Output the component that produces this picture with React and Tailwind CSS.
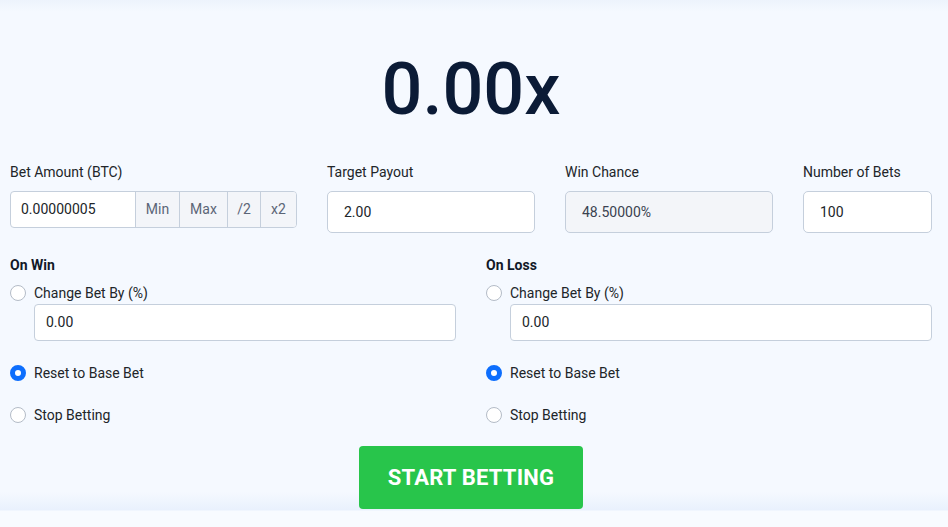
import React from "react";

function Radio({ checked, label }) {
  return (
    <div className="flex items-center h-5">
      <span
        className={
          checked
            ? "w-4 h-4 rounded-full border-[5px] border-[#0d6efd] bg-white box-border"
            : "w-4 h-4 rounded-full border border-[#b4bcc7] bg-white box-border"
        }
      />
      <span className="ml-2 text-[14px] leading-5 text-[#212529]">{label}</span>
    </div>
  );
}

function Section({ title }) {
  return (
    <div className="w-[446px] flex flex-col">
      <div className="text-[14px] leading-5 font-bold text-[#111827]">{title}</div>
      <div className="mt-[8px]">
        <Radio checked={false} label="Change Bet By (%)" />
      </div>
      <div className="mt-[1px] ml-[24px] h-[37px] border border-[#c5cfdc] rounded-[4px] bg-white flex items-center px-[11px] text-[14px] text-[#212529]">
        0.00
      </div>
      <div className="mt-[22px]">
        <Radio checked={true} label="Reset to Base Bet" />
      </div>
      <div className="mt-[22px]">
        <Radio checked={false} label="Stop Betting" />
      </div>
    </div>
  );
}

export default function App() {
  return (
    <div
      className="w-full h-[527px] overflow-hidden bg-[linear-gradient(to_bottom,#edf3fc_0px,#f5f9ff_12px,#f5f9ff_492px,#e9f1fd_510px,#f8fbff_511px,#f8fbff_527px)]"
      style={{ fontFamily: "Roboto, 'Noto Sans', sans-serif" }}
    >
      <div className="pl-[10px] pr-[16px] pt-[54px] flex flex-col">
        <div className="text-center text-[72px] leading-none font-medium text-[#0b1b36]">0.00x</div>

        <div className="mt-[36px] flex gap-[30px] items-start">
          <div className="w-[287px] flex flex-col">
            <div className="text-[14px] leading-5 text-[#212529] mb-[9px]">Bet Amount (BTC)</div>
            <div className="h-[37px] flex border border-[#c5cfdc] rounded-[4px] overflow-hidden bg-white text-[14px]">
              <div className="flex-1 flex items-center px-[10px] text-[#212529]">0.00000005</div>
              <div className="w-[44px] flex items-center justify-center bg-[#f3f5f9] border-l border-[#c5cfdc] text-[#5b6577]">Min</div>
              <div className="w-[48px] flex items-center justify-center bg-[#f3f5f9] border-l border-[#c5cfdc] text-[#5b6577]">Max</div>
              <div className="w-[33px] flex items-center justify-center bg-[#f3f5f9] border-l border-[#c5cfdc] text-[#5b6577]">/2</div>
              <div className="w-[36px] flex items-center justify-center bg-[#f3f5f9] border-l border-[#c5cfdc] text-[#5b6577]">x2</div>
            </div>
          </div>
          <div className="w-[208px] flex flex-col">
            <div className="text-[14px] leading-5 text-[#212529] mb-[9px]">Target Payout</div>
            <div className="h-[42px] border border-[#c5cfdc] rounded-[5px] bg-white flex items-center px-[16px] text-[14px] text-[#212529]">2.00</div>
          </div>
          <div className="w-[208px] flex flex-col">
            <div className="text-[14px] leading-5 text-[#212529] mb-[9px]">Win Chance</div>
            <div className="h-[42px] border border-[#c5cfdc] rounded-[5px] bg-[#f3f5f9] flex items-center px-[16px] text-[14px] text-[#3a4250]">48.50000%</div>
          </div>
          <div className="w-[129px] flex flex-col">
            <div className="text-[14px] leading-5 text-[#212529] mb-[9px]">Number of Bets</div>
            <div className="h-[42px] border border-[#c5cfdc] rounded-[5px] bg-white flex items-center px-[16px] text-[14px] text-[#212529]">100</div>
          </div>
        </div>

        <div className="mt-[22px] flex gap-[30px]">
          <Section title="On Win" />
          <Section title="On Loss" />
        </div>

        <div className="mt-[21px] flex justify-center">
          <button className="w-[224px] h-[63px] rounded-[4px] bg-[#28c54b] text-white text-[22px] font-bold tracking-[0.2px]">
            START BETTING
          </button>
        </div>
      </div>
    </div>
  );
}
